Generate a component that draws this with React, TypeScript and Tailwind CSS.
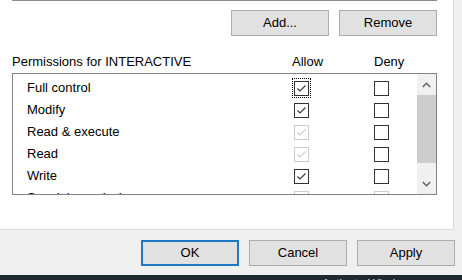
import React from "react";

type BoxState = "checked" | "unchecked" | "disabledChecked" | "disabled";

function Box({ state, focus }: { state: BoxState; focus?: boolean }) {
  const light = state === "disabledChecked" || state === "disabled";
  const border = light ? "border-[#cccccc]" : "border-[#333333]";
  const showCheck = state === "checked" || state === "disabledChecked";
  return (
    <span className="relative inline-flex shrink-0">
      <span className={`w-[15px] h-[15px] border ${border} bg-white flex items-center justify-center`}>
        {showCheck && (
          <svg width="13" height="13" viewBox="0 0 13 13">
            <path
              d="M2.5 6.5 L5 9 L10.5 3.5"
              fill="none"
              stroke={light ? "#cccccc" : "#3c3c3c"}
              strokeWidth="1.2"
            />
          </svg>
        )}
      </span>
      {focus && (
        <span className="absolute -left-[2px] -top-[3px] w-[19px] h-[20px] border border-dotted border-black" />
      )}
    </span>
  );
}

const rows: { name: string; allow: BoxState; deny: BoxState; focus?: boolean }[] = [
  { name: "Full control", allow: "checked", deny: "unchecked", focus: true },
  { name: "Modify", allow: "checked", deny: "unchecked" },
  { name: "Read & execute", allow: "disabledChecked", deny: "unchecked" },
  { name: "Read", allow: "disabledChecked", deny: "unchecked" },
  { name: "Write", allow: "checked", deny: "unchecked" },
  { name: "Special permissions", allow: "disabled", deny: "disabled" },
];

function Btn({ label, primary }: { label: string; primary?: boolean }) {
  return (
    <div
      className={`w-[98px] h-[26px] flex items-center justify-center bg-[#e1e1e1] ${
        primary ? "border-2 border-[#1f78c4]" : "border border-[#adadad]"
      }`}
    >
      {label}
    </div>
  );
}

function Chevron({ up }: { up?: boolean }) {
  return (
    <svg width="9" height="6" viewBox="0 0 9 6">
      <path
        d={up ? "M0.8 5 L4.5 1.3 L8.2 5" : "M0.8 1 L4.5 4.7 L8.2 1"}
        fill="none"
        stroke="#606060"
        strokeWidth="1.4"
      />
    </svg>
  );
}

export default function App() {
  return (
    <div className="w-[462px] h-[280px] bg-[#f0f0f0] flex flex-col overflow-hidden font-['Liberation_Sans',Arial,sans-serif] text-[13px] text-black">
      <div className="flex h-[230px] shrink-0">
        <div className="w-[454px] bg-white border-r border-b border-[#d9d9d9] pl-[12px] pr-[16px] flex flex-col">
          <div className="h-px bg-[#8c8c8c]" />
          <div className="flex justify-end gap-[10px] mt-[9px]">
            <Btn label="Add..." />
            <Btn label="Remove" />
          </div>
          <div className="grid grid-cols-[280px_82px_1fr] h-[16px] leading-[16px] mt-[18px]">
            <span>Permissions for INTERACTIVE</span>
            <span>Allow</span>
            <span>Deny</span>
          </div>
          <div className="mt-[3px] h-[122px] border border-[#828282] flex overflow-hidden">
            <div className="flex-1 pt-[3px] overflow-hidden">
              {rows.map((r) => (
                <div key={r.name} className="h-[22px] flex items-center">
                  <span className="w-[281px] pl-[14px] shrink-0 whitespace-nowrap">{r.name}</span>
                  <Box state={r.allow} focus={r.focus} />
                  <span className="w-[65px] shrink-0" />
                  <Box state={r.deny} />
                </div>
              ))}
            </div>
            <div className="w-[19px] bg-[#f0f0f0] flex flex-col shrink-0">
              <div className="h-[21px] flex items-center justify-center">
                <Chevron up />
              </div>
              <div className="h-[68px] bg-[#cdcdcd]" />
              <div className="flex-1" />
              <div className="h-[21px] flex items-center justify-center">
                <Chevron />
              </div>
            </div>
          </div>
        </div>
        <div className="flex-1" />
      </div>
      <div className="flex justify-end gap-[10px] pr-[7px] mt-[10px]">
        <Btn label="OK" primary />
        <Btn label="Cancel" />
        <Btn label="Apply" />
      </div>
      <div className="mt-auto h-[5px] bg-[#1e2a2f] overflow-hidden pl-[322px] pt-[2px] text-[12px] leading-[14px] text-[#d0d0d0] whitespace-nowrap">
        Activate Windows
      </div>
    </div>
  );
}
